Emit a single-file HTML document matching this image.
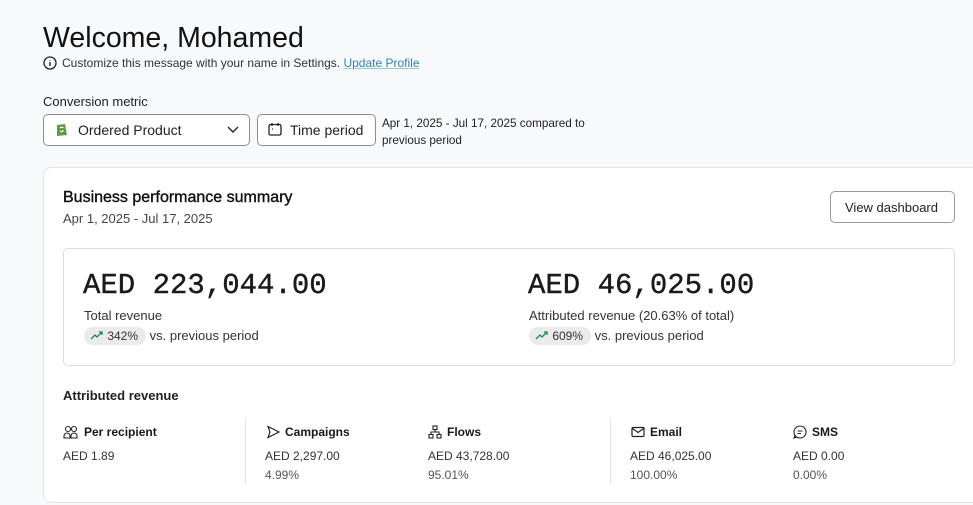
<!DOCTYPE html>
<html><head><meta charset="utf-8"><style>
*{margin:0;padding:0;box-sizing:border-box}
body{width:973px;height:505px;overflow:hidden;background:#f8f9fb;font-family:"Liberation Sans",sans-serif;color:#1a1a1a;position:relative}
.a{position:absolute;white-space:nowrap}
.btn{position:absolute;background:#fff;border:1px solid #8e8e8e;border-radius:5px}
.mono{font-family:"Liberation Mono",monospace;font-size:29px;color:#1a1a1a;-webkit-text-stroke:0.4px #1a1a1a}
.pill{display:inline-block;background:#ebebeb;border-radius:10px;padding:2px 8px 2px 6px;font-size:12px;color:#333}
.lbl{font-size:12px;font-weight:bold;display:flex;align-items:center;gap:5px}
.v{font-size:12px;color:#333}
.p{font-size:12px;color:#555}
</style></head><body>
<div class="a" style="left:43px;top:22px;font-size:28.5px;color:#111">Welcome, Mohamed</div>
<div class="a" style="left:43px;top:56px;font-size:12px;color:#333;display:flex;align-items:center;gap:5px">
<svg width="14" height="14" viewBox="0 0 14 14"><circle cx="7" cy="7" r="6" fill="none" stroke="#222" stroke-width="1.3"/><path d="M7 6v4M7 4v.5" stroke="#222" stroke-width="1.4"/></svg>
<span>Customize this message with your name in Settings. <span style="color:#2f83b5;text-decoration:underline;text-decoration-color:#9cc">Update Profile</span></span></div>
<div class="a" style="left:43px;top:94px;font-size:13px;color:#222">Conversion metric</div>
<div class="btn" style="left:43px;top:114px;width:207px;height:32px"></div>
<svg class="a" style="left:55px;top:122px" width="13" height="15" viewBox="0 0 13 15"><path d="M2 3l8-1 2 11-10 1z" fill="#5e9e3b"/><path d="M5 6c1-1 3-1 3 0M5 9c1 1 3 1 3-1" stroke="#fff" stroke-width="1.2" fill="none"/></svg>
<div class="a" style="left:78px;top:122px;font-size:14px;color:#222">Ordered Product</div>
<svg class="a" style="left:227px;top:126px" width="12" height="8" viewBox="0 0 12 8"><path d="M1 1l5 5 5-5" stroke="#222" stroke-width="1.4" fill="none"/></svg>
<div class="btn" style="left:257px;top:114px;width:119px;height:32px"></div>
<svg class="a" style="left:268px;top:122px" width="14" height="14" viewBox="0 0 14 14"><rect x="1" y="2.5" width="12" height="10.5" rx="1.5" fill="none" stroke="#222" stroke-width="1.3"/><path d="M4 1v3M10 1v3M4 7h1" stroke="#222" stroke-width="1.3"/></svg>
<div class="a" style="left:290px;top:122px;font-size:14px;color:#222">Time period</div>
<div class="a" style="left:382px;top:115px;font-size:11.7px;line-height:17px;color:#222">Apr 1, 2025 - Jul 17, 2025 compared to<br>previous period</div>

<div style="position:absolute;left:43px;top:167px;width:940px;height:336px;background:#fff;border:1px solid #e3e3e3;border-radius:8px"></div>
<div class="a" style="left:63px;top:189px;font-size:16px;color:#111;-webkit-text-stroke:0.4px #111">Business performance summary</div>
<div class="a" style="left:63px;top:211px;font-size:13px;color:#444">Apr 1, 2025 - Jul 17, 2025</div>
<div class="btn" style="left:830px;top:191px;width:125px;height:32px;border-color:#999"></div>
<div class="a" style="left:845px;top:200px;font-size:13px;color:#222">View dashboard</div>

<div style="position:absolute;left:63px;top:248px;width:892px;height:118px;border:1px solid #dcdcdc;border-radius:5px"></div>
<div class="a mono" style="left:83px;top:269px">AED 223,044.00</div>
<div class="a" style="left:84px;top:308px;font-size:13px;color:#333">Total revenue</div>
<div class="a" style="left:84px;top:327px;font-size:13px;color:#333"><span class="pill"><svg width="14" height="10" viewBox="0 0 14 10"><path d="M1 9l4-4 2 2 5-5M9 2h3v3" stroke="#1d8a4a" stroke-width="1.3" fill="none"/></svg> 342%</span> vs. previous period</div>
<div class="a mono" style="left:528px;top:269px">AED 46,025.00</div>
<div class="a" style="left:529px;top:308px;font-size:13px;color:#333">Attributed revenue (20.63% of total)</div>
<div class="a" style="left:529px;top:327px;font-size:13px;color:#333"><span class="pill"><svg width="14" height="10" viewBox="0 0 14 10"><path d="M1 9l4-4 2 2 5-5M9 2h3v3" stroke="#1d8a4a" stroke-width="1.3" fill="none"/></svg> 609%</span> vs. previous period</div>

<div class="a" style="left:63px;top:388px;font-size:13px;font-weight:bold;color:#222">Attributed revenue</div>
<div style="position:absolute;left:245px;top:418px;width:1px;height:66px;background:#e5e5e5"></div>
<div style="position:absolute;left:610px;top:418px;width:1px;height:66px;background:#e5e5e5"></div>

<div class="a lbl" style="left:63px;top:425px"><svg width="16" height="14" viewBox="0 0 16 14"><circle cx="5" cy="4" r="2.5" fill="none" stroke="#222" stroke-width="1.1"/><circle cx="11" cy="4" r="2.5" fill="none" stroke="#222" stroke-width="1.1"/><path d="M1 13v-2a3 3 0 016 0v2zM8 13v-2a3 3 0 016 0v2z" fill="none" stroke="#222" stroke-width="1.1"/></svg>Per recipient</div>
<div class="a v" style="left:63px;top:449px">AED 1.89</div>

<div class="a lbl" style="left:266px;top:425px"><svg width="14" height="14" viewBox="0 0 14 14"><path d="M2 1.5l11 5.5-11 5.5 2-5.5z" fill="none" stroke="#222" stroke-width="1.2"/></svg>Campaigns</div>
<div class="a v" style="left:265px;top:449px">AED 2,297.00</div>
<div class="a p" style="left:265px;top:468px">4.99%</div>

<div class="a lbl" style="left:428px;top:425px"><svg width="14" height="14" viewBox="0 0 14 14"><rect x="5" y="1" width="4" height="3.5" fill="none" stroke="#222" stroke-width="1.1"/><rect x="1" y="9.5" width="4" height="3.5" fill="none" stroke="#222" stroke-width="1.1"/><rect x="9" y="9.5" width="4" height="3.5" fill="none" stroke="#222" stroke-width="1.1"/><path d="M7 4.5v2.5M3 9.5V7h8v2.5" fill="none" stroke="#222" stroke-width="1.1"/></svg>Flows</div>
<div class="a v" style="left:428px;top:449px">AED 43,728.00</div>
<div class="a p" style="left:428px;top:468px">95.01%</div>

<div class="a lbl" style="left:631px;top:425px"><svg width="14" height="12" viewBox="0 0 14 12"><rect x="1" y="1.5" width="12" height="9" rx="1" fill="none" stroke="#222" stroke-width="1.2"/><path d="M1.5 2.5l5.5 4 5.5-4" fill="none" stroke="#222" stroke-width="1.2"/></svg>Email</div>
<div class="a v" style="left:630px;top:449px">AED 46,025.00</div>
<div class="a p" style="left:630px;top:468px">100.00%</div>

<div class="a lbl" style="left:793px;top:425px"><svg width="14" height="14" viewBox="0 0 14 14"><path d="M7 1a6 6 0 11-5 9.3L1 13l2.7-1A6 6 0 017 1z" fill="none" stroke="#222" stroke-width="1.1"/><path d="M4.5 6h5M4.5 8.5h3.5" stroke="#222" stroke-width="1.1"/></svg>SMS</div>
<div class="a v" style="left:793px;top:449px">AED 0.00</div>
<div class="a p" style="left:793px;top:468px">0.00%</div>
</body></html>
